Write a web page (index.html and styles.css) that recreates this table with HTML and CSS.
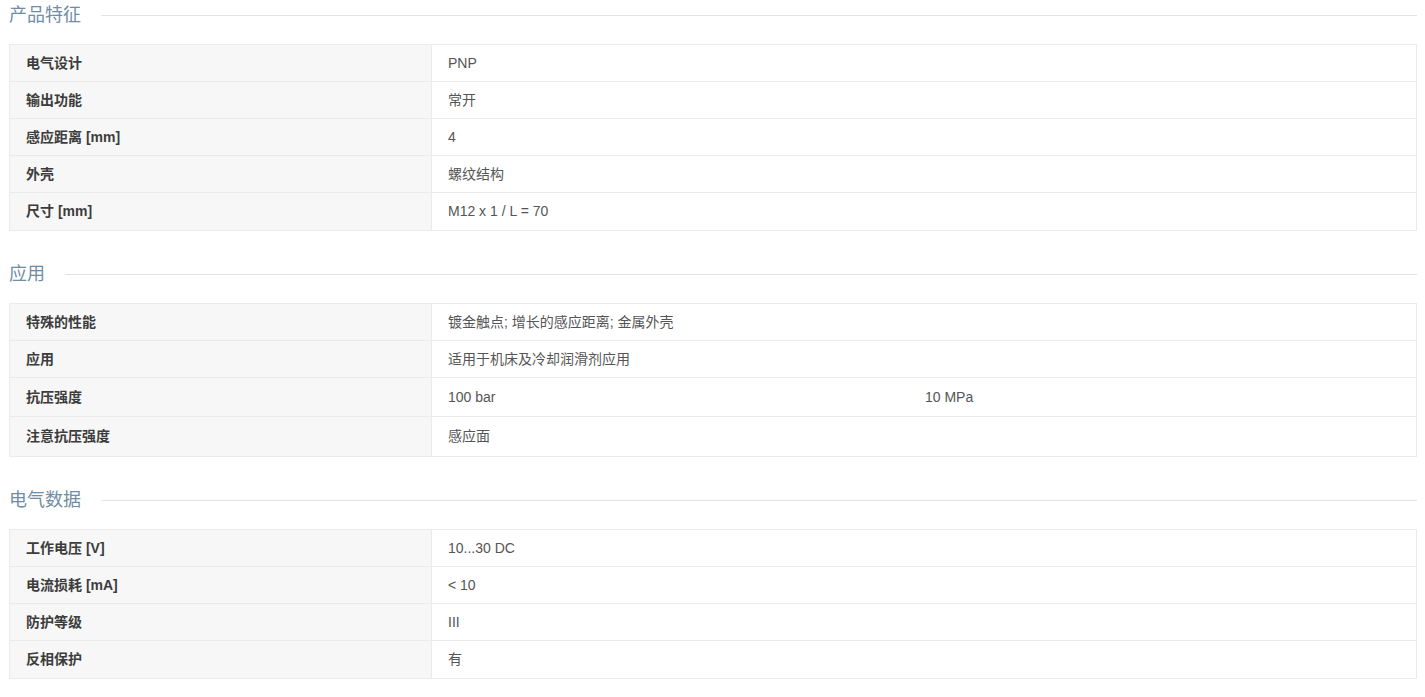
FILE: index.html
```html
<!DOCTYPE html>
<html lang="zh-CN">
<head>
<meta charset="utf-8">
<title>产品特征</title>
<link rel="stylesheet" href="styles.css">
</head>
<body>
<div class="page">
  <section class="group">
    <h2 class="group-title"><span>产品特征</span></h2>
    <table class="spec">
      <tr><th>电气设计</th><td>PNP</td></tr>
      <tr><th>输出功能</th><td>常开</td></tr>
      <tr><th>感应距离 [mm]</th><td>4</td></tr>
      <tr><th>外壳</th><td>螺纹结构</td></tr>
      <tr><th>尺寸 [mm]</th><td>M12 x 1 / L = 70</td></tr>
    </table>
  </section>
  <section class="group">
    <h2 class="group-title"><span>应用</span></h2>
    <table class="spec">
      <tr><th>特殊的性能</th><td>镀金触点; 增长的感应距离; 金属外壳</td></tr>
      <tr><th>应用</th><td>适用于机床及冷却润滑剂应用</td></tr>
      <tr class="tall"><th>抗压强度</th><td><div class="split"><span>100 bar</span><span>10 MPa</span></div></td></tr>
      <tr class="tall"><th>注意抗压强度</th><td>感应面</td></tr>
    </table>
  </section>
  <section class="group">
    <h2 class="group-title"><span>电气数据</span></h2>
    <table class="spec">
      <tr><th>工作电压 [V]</th><td>10...30 DC</td></tr>
      <tr><th>电流损耗 [mA]</th><td>&lt; 10</td></tr>
      <tr><th>防护等级</th><td>III</td></tr>
      <tr><th>反相保护</th><td>有</td></tr>
    </table>
  </section>
</div>
</body>
</html>
```

FILE: styles.css
```css
html, body {
  margin: 0;
  padding: 0;
  background: #ffffff;
}
body {
  font-family: "Liberation Sans", Arial, "Noto Sans CJK SC", sans-serif;
  font-size: 14px;
  color: #555555;
}
.page {
  padding: 3px 8px 0 9px;
}
.group {
  margin-bottom: 31px;
}
.group-title {
  display: flex;
  align-items: center;
  gap: 20px;
  margin: 0 0 17px 0;
  font-size: 18px;
  font-weight: normal;
  line-height: 24px;
  color: #6f8da4;
}
.group-title::after {
  content: "";
  flex: 1;
  height: 1px;
  background: #e3e3e3;
}
.spec {
  width: 100%;
  border-collapse: collapse;
  table-layout: fixed;
}
.spec th, .spec td {
  border: 1px solid #ebebeb;
  padding: 10px 16px 9px;
  line-height: 17px;
  height: 17px;
  text-align: left;
  vertical-align: middle;
}
.spec th {
  width: 389px;
  background: #f7f7f7;
  font-weight: bold;
  color: #3c3c3c;
}
.spec td {
  color: #555555;
}
.spec tr.tall th, .spec tr.tall td {
  padding-top: 11px;
  padding-bottom: 10px;
}
.spec tr:last-child th, .spec tr:last-child td {
  padding-bottom: 10px;
}
.spec tr.tall:last-child th, .spec tr.tall:last-child td {
  padding-bottom: 11px;
}
.split {
  display: grid;
  grid-template-columns: 477px 1fr;
}
```
